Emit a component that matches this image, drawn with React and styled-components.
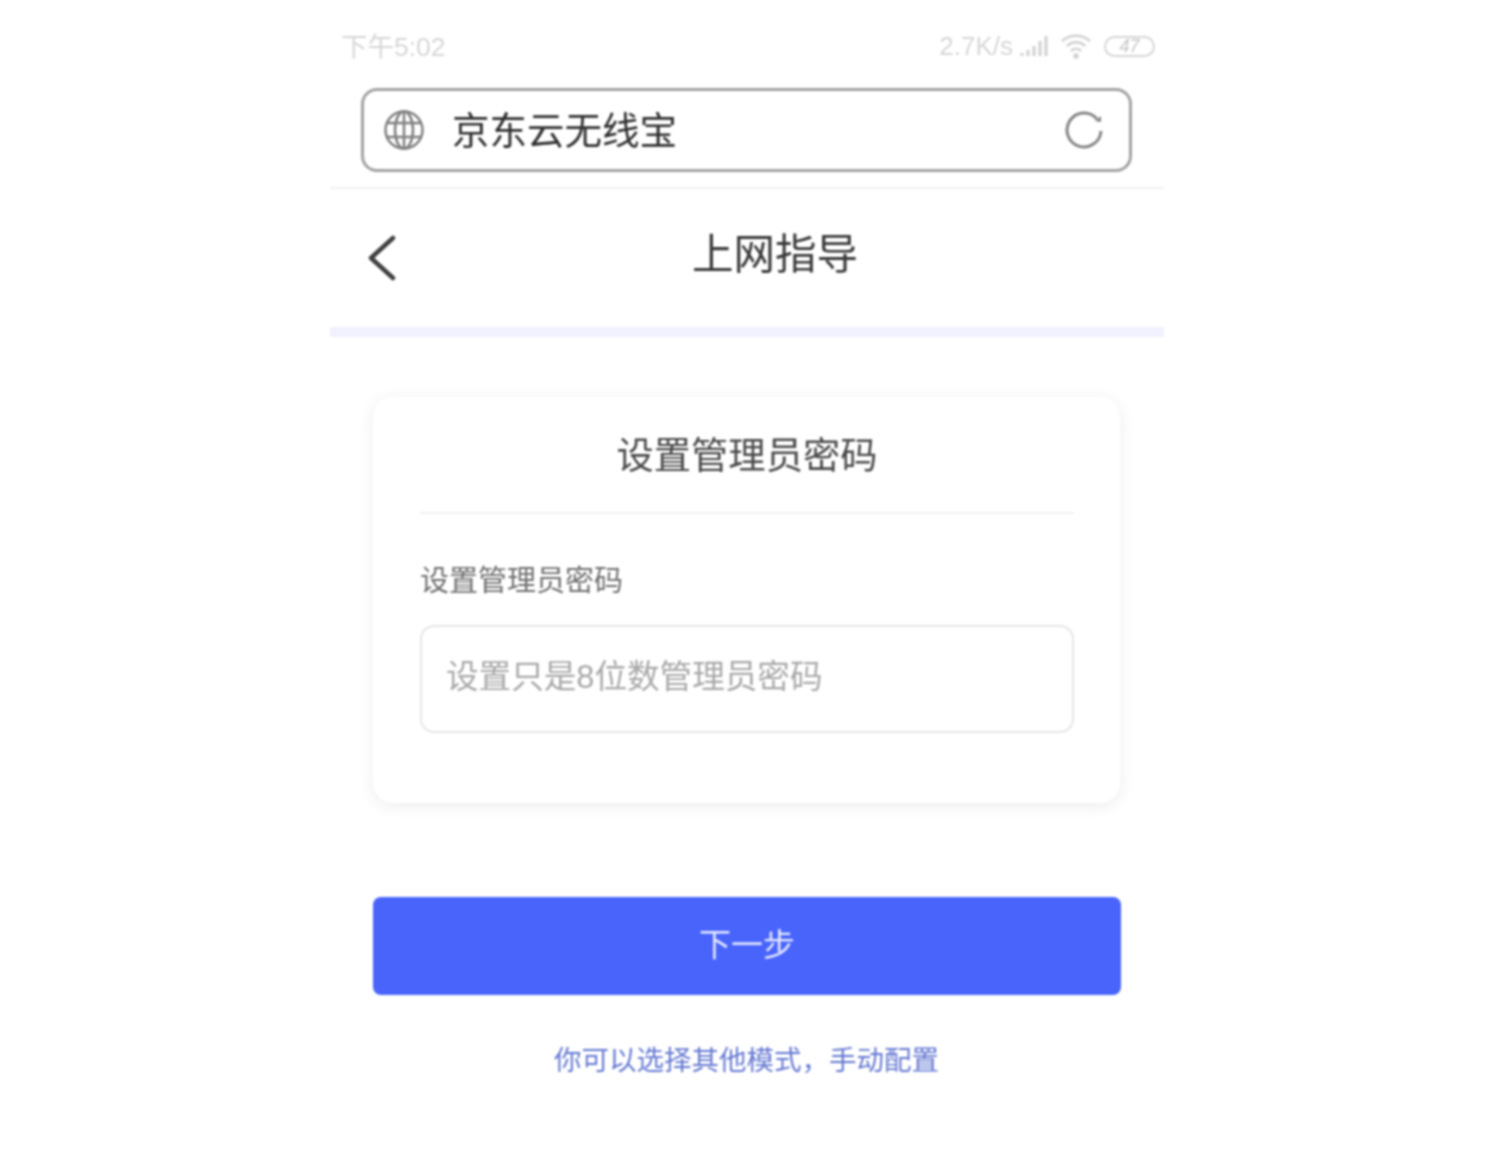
import styled, { createGlobalStyle } from "styled-components";

const Global = createGlobalStyle`
  html, body {
    margin: 0;
    padding: 0;
    background: #fff;
  }
  * { box-sizing: border-box; }
`;

const Screen = styled.div`
  width: 834px;
  height: 1152px;
  margin-left: 330px;
  overflow: hidden;
  font-family: "Liberation Sans", "Noto Sans CJK SC", sans-serif;
  filter: blur(0.9px);
`;

const StatusBar = styled.div`
  height: 88px;
  padding: 30px 9px 0 11px;
  display: flex;
  justify-content: space-between;
  align-items: flex-start;
  color: #d6d6d6;
  font-size: 26.5px;
  line-height: 34px;
`;

const StatusRight = styled.div`
  display: flex;
  align-items: center;
  height: 32px;
`;

const Speed = styled.span`
  margin-right: 6px;
  font-size: 26px;
`;

const Battery = styled.div`
  width: 51px;
  height: 21px;
  margin-left: 12px;
  border: 2px solid #d6d6d6;
  border-radius: 11px;
  font-size: 18px;
  font-style: italic;
  line-height: 17px;
  text-align: center;
  color: #c4c4c4;
`;

const AddressBar = styled.div`
  width: 771px;
  height: 84px;
  margin-left: 31px;
  padding: 0 26px 0 20px;
  display: flex;
  align-items: center;
  border: 3px solid #a2a2a2;
  border-radius: 16px;
`;

const AddressText = styled.div`
  flex: 1;
  margin: 2px 0 0 28px;
  font-size: 37.5px;
  line-height: 48px;
  color: #2e2e2e;
`;

const Separator = styled.div`
  height: 2px;
  margin-top: 15px;
  background: #f1f1f1;
`;

const NavRow = styled.div`
  height: 138px;
  padding: 46px 0 0 38px;
  display: flex;
  align-items: flex-start;
`;

const NavTitle = styled.div`
  margin: -7px 0 0 296px;
  font-size: 41.5px;
  line-height: 54px;
  color: #383838;
`;

const NavBorder = styled.div`
  height: 10px;
  background: #f1f0fd;
`;

const Body = styled.div`
  padding: 60px 44px 0 43px;
`;

const Card = styled.div`
  height: 406px;
  padding: 0 46px 0 47px;
  background: #fff;
  border-radius: 20px;
  box-shadow: 0 3px 16px rgba(60, 60, 80, 0.09);
`;

const CardTitle = styled.div`
  height: 117px;
  padding-top: 35px;
  border-bottom: 2px solid #f1f1f1;
  font-size: 37.3px;
  line-height: 48px;
  text-align: center;
  color: #484848;
`;

const Label = styled.div`
  margin-top: 48px;
  font-size: 29px;
  line-height: 38px;
  color: #6e6e6e;
`;

const Field = styled.div`
  height: 108px;
  margin-top: 25px;
  padding: 30px 24px 0;
  border: 2px solid #e6e6e6;
  border-radius: 14px;
  font-size: 32.6px;
  line-height: 40px;
  color: #a8a8a8;
`;

const NextButton = styled.button`
  display: block;
  width: 748px;
  height: 98px;
  margin-top: 94px;
  padding: 0 0 9px;
  border: 0;
  border-radius: 8px;
  background: #4864fb;
  color: #e6eaff;
  font-family: inherit;
  font-size: 32px;
`;

const AltLink = styled.div`
  margin-top: 47px;
  font-size: 27.5px;
  line-height: 38px;
  text-align: center;
  color: #6478d2;
`;

function Signal() {
  return (
    <svg width="31" height="22" viewBox="0 0 30 22" fill="#d0d0d0">
      <rect x="1" y="18" width="3" height="3" />
      <rect x="7" y="15" width="3" height="6" />
      <rect x="13" y="11" width="3" height="10" />
      <rect x="19" y="6" width="3" height="15" />
      <rect x="25" y="1" width="3" height="20" />
    </svg>
  );
}

function Wifi() {
  return (
    <svg width="32" height="26" viewBox="0 0 32 26" fill="none" stroke="#d0d0d0" strokeWidth="2.5" style={{ marginLeft: 10 }}>
      <path d="M2 8 C 10 1, 22 1, 30 8" />
      <path d="M7 13 C 12 8, 20 8, 25 13" />
      <path d="M11 18 C 14 15, 18 15, 21 18" />
      <circle cx="16" cy="23" r="1.5" fill="#d0d0d0" />
    </svg>
  );
}

function Globe() {
  return (
    <svg width="40" height="40" viewBox="0 0 40 40" fill="none" stroke="#808080" strokeWidth="2.5">
      <circle cx="20" cy="20" r="18.5" />
      <ellipse cx="20" cy="20" rx="9" ry="18.5" />
      <path d="M20 2 V38 M3.5 13 H36.5 M3.5 27 H36.5" />
    </svg>
  );
}

function Reload() {
  return (
    <svg width="38" height="38" viewBox="0 0 38 38" fill="none" stroke="#858585" strokeWidth="3">
      <path d="M36 20 A 17 17 0 1 1 32 8" />
      <path d="M36 5 L36 11 L30 10 Z" stroke="none" fill="#858585" />
    </svg>
  );
}

function Back() {
  return (
    <svg width="28" height="46" viewBox="0 0 28 46" fill="none" stroke="#404040" strokeWidth="4.5" strokeLinecap="round" strokeLinejoin="round">
      <path d="M25 3 L3 23 L25 43" />
    </svg>
  );
}

export default function App() {
  return (
    <Screen>
      <Global />
      <StatusBar>
        <span>下午5:02</span>
        <StatusRight>
          <Speed>2.7K/s</Speed>
          <Signal />
          <Wifi />
          <Battery>47</Battery>
        </StatusRight>
      </StatusBar>
      <AddressBar>
        <Globe />
        <AddressText>京东云无线宝</AddressText>
        <Reload />
      </AddressBar>
      <Separator />
      <NavRow>
        <Back />
        <NavTitle>上网指导</NavTitle>
      </NavRow>
      <NavBorder />
      <Body>
        <Card>
          <CardTitle>设置管理员密码</CardTitle>
          <Label>设置管理员密码</Label>
          <Field>设置只是8位数管理员密码</Field>
        </Card>
        <NextButton>下一步</NextButton>
        <AltLink>你可以选择其他模式，手动配置</AltLink>
      </Body>
    </Screen>
  );
}
